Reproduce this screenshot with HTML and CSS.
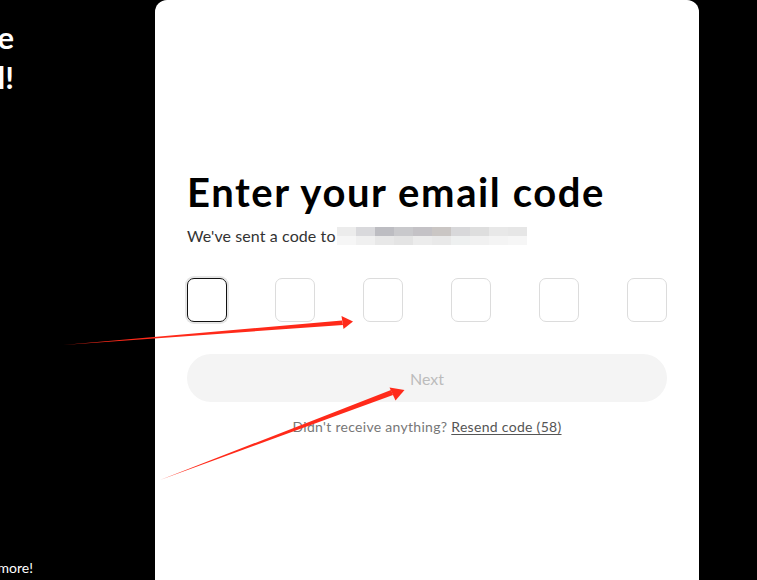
FILE: index.html
```html
<!DOCTYPE html>
<html>
<head>
<meta charset="utf-8">
<link rel="stylesheet" href="styles.css">
</head>
<body>
<div class="page">
  <aside class="side">
    <div class="promo">
      <div class="promo-line">Welcome</div>
      <div class="promo-line">to your email!</div>
    </div>
    <div class="promo-foot">and much more!</div>
  </aside>
  <main class="card">
    <h1 class="title">Enter your email code</h1>
    <p class="sub">We've sent a code to <span class="blur"><i class="px p1"></i><i class="px p2"></i><i class="px p3"></i><i class="px p4"></i><i class="px p5"></i><i class="px p6"></i><i class="px p7"></i><i class="px p8"></i><i class="px p9"></i><i class="px p10"></i></span></p>
    <div class="codes">
      <div class="code active"></div>
      <div class="code"></div>
      <div class="code"></div>
      <div class="code"></div>
      <div class="code"></div>
      <div class="code"></div>
    </div>
    <button class="next">Next</button>
    <p class="resend">Didn't receive anything? <a class="link">Resend code (58)</a></p>
  </main>
  <div class="right"></div>
</div>
<svg class="arrows" width="757" height="580" viewBox="0 0 757 580">
  <polygon points="63,345 342,320.5 343,325 " fill="#ff2a1a"/>
  <polygon points="353,321.5 341.5,316 343.5,329" fill="#ff2a1a"/>
  <polygon points="160,480 391,390 393,395" fill="#ff2a1a"/>
  <polygon points="404.5,390 389.5,387.5 395.5,400.5" fill="#ff2a1a"/>
</svg>
</body>
</html>
```
FILE: styles.css
```css
html, body { margin: 0; padding: 0; background: #000; }
body { width: 757px; height: 580px; overflow: hidden; position: relative; font-family: Lato, "Noto Sans", sans-serif; }
.page { display: flex; height: 580px; }
.side { width: 155px; flex: none; display: flex; flex-direction: column; justify-content: space-between; overflow: hidden; }
.promo { width: 14px; display: flex; flex-direction: column; align-items: flex-end; padding-top: 17px; }
.promo-line { color: #fff; font-weight: 700; font-size: 31px; line-height: 40px; white-space: nowrap; font-family: Lato, sans-serif; }
.promo-foot { width: 33px; display: flex; justify-content: flex-end; color: #fff; font-size: 14px; line-height: 18px; white-space: nowrap; padding-bottom: 3px; }
.card { width: 544px; flex: none; background: #fff; border-radius: 12px 12px 0 0; padding: 164px 32px 0; box-sizing: border-box; height: 600px; }
.right { flex: 1; }
.title { margin: 0; font-size: 40px; font-weight: 700; color: #000; line-height: 56px; letter-spacing: 1.6px; }
.sub { margin: 6px 0 0; font-size: 16px; color: #333; line-height: 20px; display: flex; align-items: center; letter-spacing: 0.1px; }
.blur { display: inline-flex; margin-left: 1px; height: 18px; }
.px { display: block; width: 19px; height: 18px; }
.p1 { background: linear-gradient(#ececec 0 50%, #f6f6f6 50%); }
.p2 { background: linear-gradient(#d9d9dc 0 50%, #f0f0f0 50%); }
.p3 { background: linear-gradient(#bdbdc2 0 50%, #e8e8e8 50%); }
.p4 { background: linear-gradient(#c9c9cc 0 50%, #e4e4e4 50%); }
.p5 { background: linear-gradient(#c4c2c6 0 50%, #ececec 50%); }
.p6 { background: linear-gradient(#cac6c4 0 50%, #e9e9e9 50%); }
.p7 { background: linear-gradient(#d8d8da 0 50%, #eef0f0 50%); }
.p8 { background: linear-gradient(#dedede 0 50%, #f1f1f1 50%); }
.p9 { background: linear-gradient(#e8e8e8 0 50%, #f4f4f4 50%); }
.p10 { background: linear-gradient(#e6e6e6 0 50%, #f6f6f6 50%); }
.codes { display: flex; justify-content: space-between; margin-top: 32px; }
.code { width: 40px; height: 44px; box-sizing: border-box; border: 1px solid #dcdcdc; border-radius: 7px; }
.code.active { border: 1.5px solid #111; box-shadow: 0 0 0 2px #e6e6e6; }
.next { display: block; width: 100%; height: 48px; margin-top: 32px; border: 0; border-radius: 24px; background: #f4f4f4; color: #bcbcbc; font-family: Lato, sans-serif; font-size: 16px; padding: 0; }
.resend { margin: 16px 0 0; text-align: center; font-size: 14px; color: #777; line-height: 18px; letter-spacing: 0.3px; }
.link { color: #555; text-decoration: underline; text-underline-offset: 2px; }
.arrows { position: absolute; left: 0; top: 0; pointer-events: none; }
```
